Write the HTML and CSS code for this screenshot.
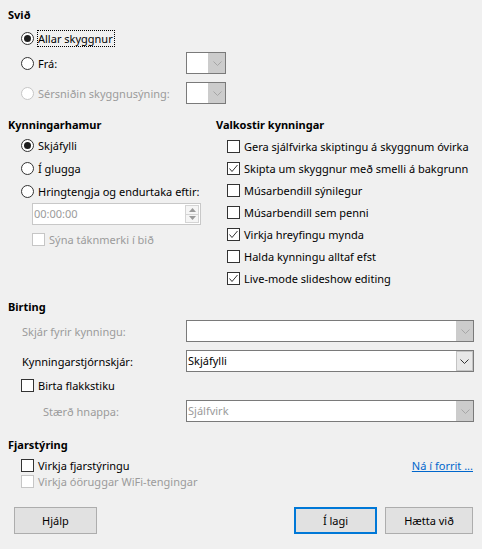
FILE: index.html
```html
<!DOCTYPE html>
<html>
<head>
<meta charset="utf-8">
<link rel="stylesheet" href="styles.css">
</head>
<body>
<div class="dlg">
  <div class="h">Svið</div>
  <div class="opt r-allar"><span class="radio on"></span><span class="focus">Allar skyggnur</span></div>
  <div class="frow r-fra">
    <div class="opt"><span class="radio"></span><span>Frá:</span></div>
    <div class="combo small"><span class="v"></span><span class="b dis"><svg width="9" height="5" viewBox="0 0 9 5"><path d="M0.5 0.5 L4.5 4.5 L8.5 0.5" fill="none" stroke="#a6a6a6" stroke-width="1"/></svg></span></div>
  </div>
  <div class="frow r-sers">
    <div class="opt dis-t"><span class="radio dis"></span><span>Sérsniðin skyggnusýning:</span></div>
    <div class="combo small"><span class="v"></span><span class="b dis"><svg width="9" height="5" viewBox="0 0 9 5"><path d="M0.5 0.5 L4.5 4.5 L8.5 0.5" fill="none" stroke="#a6a6a6" stroke-width="1"/></svg></span></div>
  </div>

  <div class="cols">
    <div class="col-left">
      <div class="h h-left">Kynningarhamur</div>
      <div class="opt l"><span class="radio on"></span><span>Skjáfylli</span></div>
      <div class="opt l"><span class="radio"></span><span>Í glugga</span></div>
      <div class="opt l"><span class="radio"></span><span>Hringtengja og endurtaka eftir:</span></div>
      <div class="spin">
        <span class="sv">00:00:00</span>
        <span class="sb">
          <span class="up"><svg width="7" height="4" viewBox="0 0 7 4"><path d="M0 4 L3.5 0 L7 4 Z" fill="#9a9a9a"/></svg></span>
          <span class="dn"><svg width="7" height="4" viewBox="0 0 7 4"><path d="M0 0 L3.5 4 L7 0 Z" fill="#9a9a9a"/></svg></span>
        </span>
      </div>
      <div class="opt sub dis-t"><span class="cb dis"></span><span>Sýna táknmerki í bið</span></div>
    </div>
    <div class="col-right">
      <div class="h">Valkostir kynningar</div>
      <div class="opt c"><span class="cb"></span><span>Gera sjálfvirka skiptingu á skyggnum óvirka</span></div>
      <div class="opt c"><span class="cb"><svg width="11" height="11" viewBox="0 0 11 11"><path d="M1.5 5.5 L4 8.5 L9.5 2" fill="none" stroke="#333" stroke-width="1"/></svg></span><span>Skipta um skyggnur með smelli á bakgrunn</span></div>
      <div class="opt c"><span class="cb"></span><span>Músarbendill sýnilegur</span></div>
      <div class="opt c"><span class="cb"></span><span>Músarbendill sem penni</span></div>
      <div class="opt c"><span class="cb"><svg width="11" height="11" viewBox="0 0 11 11"><path d="M1.5 5.5 L4 8.5 L9.5 2" fill="none" stroke="#333" stroke-width="1"/></svg></span><span>Virkja hreyfingu mynda</span></div>
      <div class="opt c"><span class="cb"></span><span>Halda kynningu alltaf efst</span></div>
      <div class="opt c"><span class="cb"><svg width="11" height="11" viewBox="0 0 11 11"><path d="M1.5 5.5 L4 8.5 L9.5 2" fill="none" stroke="#333" stroke-width="1"/></svg></span><span>Live-mode slideshow editing</span></div>
    </div>
  </div>

  <div class="h h-birting">Birting</div>
  <div class="frow wide r-skjar">
    <div class="lbl dis-t">Skjár fyrir kynningu:</div>
    <div class="combo"><span class="v"></span><span class="b dis"><svg width="9" height="5" viewBox="0 0 9 5"><path d="M0.5 0.5 L4.5 4.5 L8.5 0.5" fill="none" stroke="#a6a6a6" stroke-width="1"/></svg></span></div>
  </div>
  <div class="frow wide r-stjorn">
    <div class="lbl">Kynningarstjórnskjár:</div>
    <div class="combo"><span class="v">Skjáfylli</span><span class="b"><svg width="9" height="5" viewBox="0 0 9 5"><path d="M0.5 0.5 L4.5 4.5 L8.5 0.5" fill="none" stroke="#333" stroke-width="1"/></svg></span></div>
  </div>
  <div class="opt r-flakk"><span class="cb"></span><span>Birta flakkstiku</span></div>
  <div class="frow wide r-staerd">
    <div class="lbl ind dis-t">Stærð hnappa:</div>
    <div class="combo"><span class="v dis-t">Sjálfvirk</span><span class="b dis"><svg width="9" height="5" viewBox="0 0 9 5"><path d="M0.5 0.5 L4.5 4.5 L8.5 0.5" fill="none" stroke="#a6a6a6" stroke-width="1"/></svg></span></div>
  </div>

  <div class="h h-fjar">Fjarstýring</div>
  <div class="remote">
    <div class="opt rr"><span class="cb"></span><span>Virkja fjarstýringu</span></div>
    <a class="link" href="#">Ná í forrit ...</a>
  </div>
  <div class="opt rr dis-t"><span class="cb dis"></span><span>Virkja óöruggar WiFi-tengingar</span></div>

  <div class="buttons">
    <button class="btn">Hjálp</button>
    <span class="spacer"></span>
    <button class="btn def">Í lagi</button>
    <button class="btn wide-btn">Hætta við</button>
  </div>
</div>
</body>
</html>
```

FILE: styles.css
```css
* { box-sizing: border-box; }
html, body { margin: 0; padding: 0; }
body {
  background: #f0f0f0;
  font-family: "Noto Sans", "Open Sans", sans-serif;
  font-size: 11px;
  color: #000;
  width: 482px;
  height: 549px;
  overflow: hidden;
}
.dlg { padding: 5px 8px 0 8px; }
.h { font-weight: bold; height: 20px; line-height: 20px; }

.opt { display: flex; align-items: center; gap: 4px; height: 22px; padding-left: 13px; white-space: nowrap; }
.dis-t { color: #9b9b9b; }

.radio {
  flex: none; width: 13px; height: 13px; border: 1px solid #333; border-radius: 50%;
  background: #fff; display: flex; align-items: center; justify-content: center;
}
.radio.on::after { content: ""; width: 7px; height: 7px; border-radius: 50%; background: #1e1e1e; }
.radio.dis { border-color: #c6c6c6; }

.cb {
  flex: none; width: 13px; height: 13px; border: 1px solid #333; background: #fff;
  display: flex; align-items: center; justify-content: center;
}
.cb.dis { border-color: #c6c6c6; }

.focus { outline: 1px dotted #000; outline-offset: 0; line-height: 15px; padding: 0 1px 0 0; }

.r-allar { margin-top: 2px; }
.frow { display: grid; grid-template-columns: 178px 1fr; align-items: center; height: 22px; }
.frow .opt { padding-left: 13px; }
.r-fra { margin-top: 3px; }
.r-sers { margin-top: 8px; }

.combo { display: flex; height: 22px; border: 1px solid #7a7a7a; background: #fff; }
.combo.small { width: 40px; }
.combo .v { flex: 1; padding-left: 1px; line-height: 20px; }
.combo .b {
  flex: none; width: 17px; background: #e5e5e5; border-left: 1px solid #d9d9d9;
  display: flex; align-items: center; justify-content: center;
}
.combo .b.dis { background: #cccccc; border-left-color: #cccccc; }

.cols { display: grid; grid-template-columns: 208px 1fr; margin-top: 11px; }
.h-left { height: 19px; line-height: 20px; }
.opt.l { height: 23px; }
.spin {
  margin-left: 24px; width: 169px; height: 22px; border: 1px solid #c8c8c8; background: #fff;
  display: flex; align-items: stretch;
}
.sv { flex: 1; line-height: 20px; padding-left: 1px; color: #9b9b9b; }
.sb { width: 15px; display: flex; flex-direction: column; padding: 1px 1px 1px 0; gap: 0; }
.sb .up, .sb .dn {
  flex: 1; display: flex; align-items: center; justify-content: center;
  border: 1px solid #d4d4d4; background: #f5f5f5;
}
.sb .dn { border-top: none; }
.opt.sub { padding-left: 24px; margin-top: 3px; }
.opt.c { height: 22px; padding-left: 11px; }

.h-birting { margin-top: 8px; }
.frow.wide .lbl { padding-left: 14px; }
.frow.wide .lbl.ind { padding-left: 35px; }
.r-skjar { margin-top: 3px; }
.r-stjorn { margin-top: 8px; }
.r-stjorn .combo { border-color: #7a7a7a; }
.r-stjorn .b { border: 1px solid #c4c4c4; background: #e8e8e8; }
.r-flakk { margin-top: 2px; }
.r-staerd { margin-top: 4px; }

.h-fjar { margin-top: 13px; }
.remote { display: flex; align-items: center; justify-content: space-between; margin-top: 2px; }
.opt.rr { height: 16px; }
.link { color: #0066cc; text-decoration: underline; margin-right: 1px; }

.buttons { display: flex; gap: 8px; margin-top: 18px; padding-left: 6px; padding-right: 1px; }
.spacer { flex: 1; }
.btn {
  font: inherit; height: 27px; width: 83px; background: #e1e1e1; border: 1px solid #adadad;
  color: #000; padding: 0;
}
.btn.def { border: 2px solid #0078d7; }
.btn.wide-btn { width: 88px; }
```
